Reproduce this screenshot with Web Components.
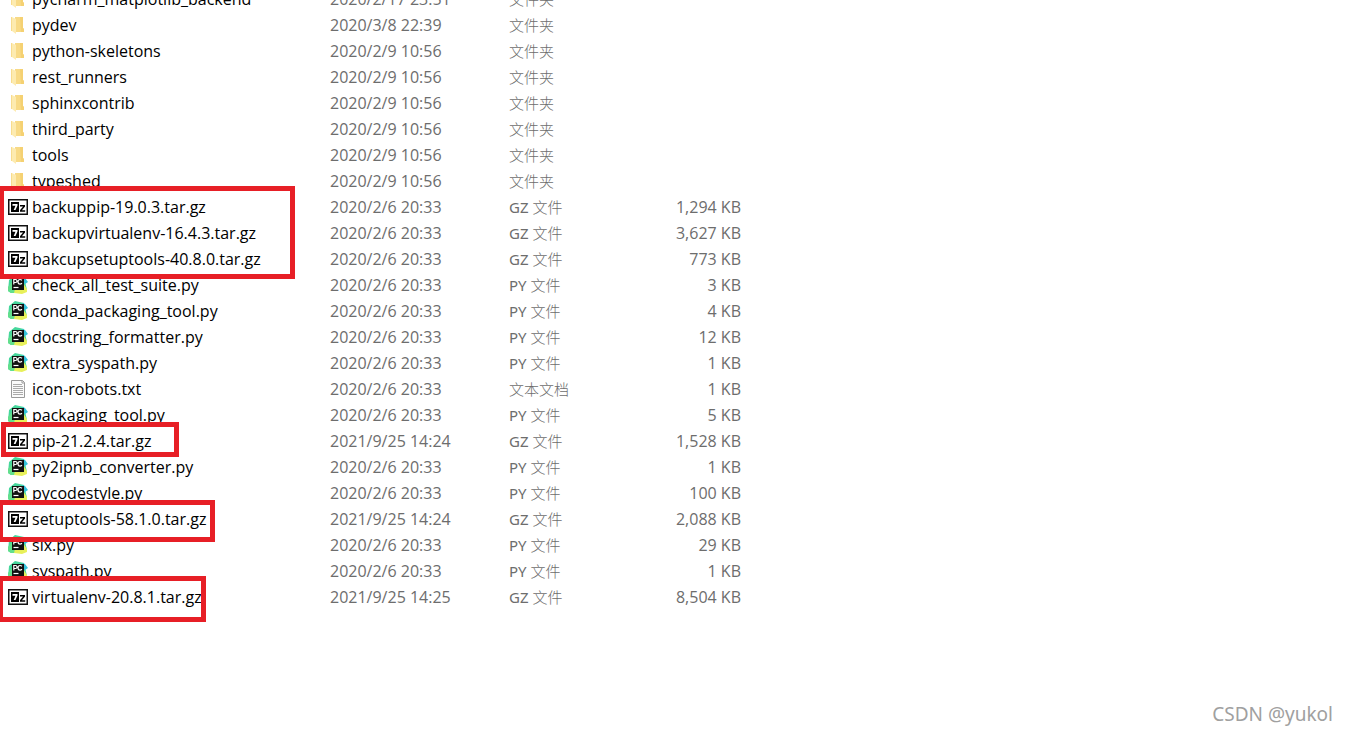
<!DOCTYPE html>
<html lang="zh-CN">
<head>
    <meta charset="UTF-8">
    <title>helpers</title>
    <style>
        body {
            margin: 0;
            background: #fff;
            overflow: hidden;
            font-family: "Open Sans", "Noto Sans CJK SC", sans-serif;
        }
    </style>
</head>

<body>

<file-explorer>
    <file-list></file-list>
    <mark-box slot="marks" style="--x: -1px; --y: 186px; --w: 296px; --h: 93px"></mark-box>
    <mark-box slot="marks" style="--x: 1px; --y: 422px; --w: 178px; --h: 35px"></mark-box>
    <mark-box slot="marks" style="--x: -2px; --y: 500px; --w: 217px; --h: 42px"></mark-box>
    <mark-box slot="marks" style="--x: -2px; --y: 576px; --w: 208px; --h: 46px"></mark-box>
    <water-mark slot="marks">CSDN @yukol</water-mark>
</file-explorer>

<script>
  const FOLDER = "文件夹";
  const files = [
    ["folder", "pycharm_matplotlib_backend", "2020/2/17 23:51", FOLDER, ""],
    ["folder", "pydev", "2020/3/8 22:39", FOLDER, ""],
    ["folder", "python-skeletons", "2020/2/9 10:56", FOLDER, ""],
    ["folder", "rest_runners", "2020/2/9 10:56", FOLDER, ""],
    ["folder", "sphinxcontrib", "2020/2/9 10:56", FOLDER, ""],
    ["folder", "third_party", "2020/2/9 10:56", FOLDER, ""],
    ["folder", "tools", "2020/2/9 10:56", FOLDER, ""],
    ["folder", "typeshed", "2020/2/9 10:56", FOLDER, ""],
    ["gz", "backuppip-19.0.3.tar.gz", "2020/2/6 20:33", "GZ 文件", "1,294 KB"],
    ["gz", "backupvirtualenv-16.4.3.tar.gz", "2020/2/6 20:33", "GZ 文件", "3,627 KB"],
    ["gz", "bakcupsetuptools-40.8.0.tar.gz", "2020/2/6 20:33", "GZ 文件", "773 KB"],
    ["py", "check_all_test_suite.py", "2020/2/6 20:33", "PY 文件", "3 KB"],
    ["py", "conda_packaging_tool.py", "2020/2/6 20:33", "PY 文件", "4 KB"],
    ["py", "docstring_formatter.py", "2020/2/6 20:33", "PY 文件", "12 KB"],
    ["py", "extra_syspath.py", "2020/2/6 20:33", "PY 文件", "1 KB"],
    ["txt", "icon-robots.txt", "2020/2/6 20:33", "文本文档", "1 KB"],
    ["py", "packaging_tool.py", "2020/2/6 20:33", "PY 文件", "5 KB"],
    ["gz", "pip-21.2.4.tar.gz", "2021/9/25 14:24", "GZ 文件", "1,528 KB"],
    ["py", "py2ipnb_converter.py", "2020/2/6 20:33", "PY 文件", "1 KB"],
    ["py", "pycodestyle.py", "2020/2/6 20:33", "PY 文件", "100 KB"],
    ["gz", "setuptools-58.1.0.tar.gz", "2021/9/25 14:24", "GZ 文件", "2,088 KB"],
    ["py", "six.py", "2020/2/6 20:33", "PY 文件", "29 KB"],
    ["py", "syspath.py", "2020/2/6 20:33", "PY 文件", "1 KB"],
    ["gz", "virtualenv-20.8.1.tar.gz", "2021/9/25 14:25", "GZ 文件", "8,504 KB"]
  ];

  const icons = {
    folder: `
      <path d="M7 2h8v11l1 1v3H7z" fill="#f8da86"/>
      <path d="M12 2h3v11l1 1v3h-3z" fill="#f5d172"/>
      <path d="M4 2l4 2v15l-4-3z" fill="#fdebb0"/>
      <path d="M3.500 2v14" stroke="#f8dc8e"/>`,
    gz: `
      <rect x="0.750" y="2.750" width="18.500" height="14.500" fill="#fff" stroke="#111" stroke-width="1.500"/>
      <path d="M3 5h8v10H3z" fill="#000"/>
      <path d="M4.500 7h5v1.500L7.500 13H5.700L7.500 8.800H4.500z" fill="#fff"/>
      <path d="M12 8.700h5M16.500 9L12.500 13.700M12 14h5.200" stroke="#000" stroke-width="1.500" fill="none"/>`,
    py: `
      <path d="M1 5L7 0l9 2 3 13-6 3H3L0 16z" fill="#46d79c"/>
      <path d="M0 12l5-6 5 12H3L0 16z" fill="#62df8c"/>
      <path d="M14 2l3 1 3 4-3 2-3-3z" fill="#35c3dc"/>
      <path d="M15 8l4 6v3l-5 2-8-1 1-4h8z" fill="#e8f05a"/>
      <path d="M4 3h12v12H4z" fill="#111"/>
      <path d="M5.800 9.500V4.500h1.700q1.500 0 1.500 1.500T7.500 7.500H6M14 5.300q-1-.8-2-.8-2 0-2 2.300t2 2.300q1 0 2-.8" fill="none" stroke="#fff" stroke-width="1.200"/>
      <path d="M5.500 12.500h5" stroke="#fff" stroke-width="1.200"/>`,
    txt: `
      <path d="M3.500 1.500h11l2 2v15h-13z" fill="#fafafa" stroke="#999"/>
      <path d="M14 1.500v2.500h2.500" fill="none" stroke="#999"/>
      <path d="M5 5.500h9M5 7.500h10M5 9.500h10M5 11.500h10M5 13.500h10M5 15.500h10" stroke="#aaa"/>`
  };

  class FileExplorer extends HTMLElement {
    constructor() {
      super();
      this.attachShadow({mode: "open"});
      this.shadowRoot.innerHTML = `
        <style>
          :host {
            display: block;
            position: relative;
            height: 100vh;
            overflow: hidden;
          }
        </style>
        <slot></slot>
        <slot name="marks"></slot>`;
    }
  }

  class FileIcon extends HTMLElement {
    constructor() {
      super();
      this.attachShadow({mode: "open"});
    }

    connectedCallback() {
      this.shadowRoot.innerHTML = `
        <style>
          :host {
            display: block;
            flex: none;
            width: 20px;
            height: 20px;
          }

          svg {
            display: block;
          }
        </style>
        <svg width="20" height="20" viewBox="0 0 20 20" aria-hidden="true">${icons[this.getAttribute("type")]}</svg>`;
    }
  }

  class FileList extends HTMLElement {
    constructor() {
      super();
      this.attachShadow({mode: "open"});
      // the list is scrolled by about half a row
      this.shadowRoot.innerHTML = `
        <style>
          :host {
            display: block;
            margin-top: -14px;
            font-size: 16px;
            line-height: 26px;
            color: #6d6d6d;
          }

          table {
            border-collapse: collapse;
            table-layout: fixed;
            width: 741px;
          }

          td {
            height: 26px;
            padding: 0;
            white-space: nowrap;
          }

          .name {
            width: 330px;
            color: #000;
          }

          .date {
            width: 179px;
          }

          .type {
            font-family: "Noto Sans", "Noto Sans CJK SC Light", "Noto Sans CJK SC", sans-serif;
            font-size: 15px;
          }

          .size {
            width: 112px;
            text-align: right;
          }

          .file {
            display: flex;
            align-items: center;
            gap: 4px;
            padding-left: 8px;
          }
        </style>
        <table>
          <tbody>
            ${files.map(([icon, name, date, type, size]) => `
            <tr>
              <td class="name"><div class="file"><file-icon type="${icon}"></file-icon><span>${name}</span></div></td>
              <td class="date">${date}</td>
              <td class="type">${type}</td>
              <td class="size">${size}</td>
            </tr>`).join("")}
          </tbody>
        </table>`;
    }
  }

  // red frame drawn over the list
  class MarkBox extends HTMLElement {
    constructor() {
      super();
      this.attachShadow({mode: "open"});
      this.shadowRoot.innerHTML = `
        <style>
          :host {
            display: block;
            position: absolute;
            box-sizing: border-box;
            left: var(--x);
            top: var(--y);
            width: var(--w);
            height: var(--h);
            border: 5px solid #e71f26;
            pointer-events: none;
          }
        </style>`;
    }
  }

  class WaterMark extends HTMLElement {
    constructor() {
      super();
      this.attachShadow({mode: "open"});
      this.shadowRoot.innerHTML = `
        <style>
          :host {
            display: block;
            position: absolute;
            right: 14px;
            bottom: 8px;
            font-family: "Noto Sans", sans-serif;
            font-size: 19px;
            line-height: 26px;
            color: #a0a0a0;
          }
        </style>
        <slot></slot>`;
    }
  }

  customElements.define("file-explorer", FileExplorer);
  customElements.define("file-icon", FileIcon);
  customElements.define("file-list", FileList);
  customElements.define("mark-box", MarkBox);
  customElements.define("water-mark", WaterMark);
</script>
</body>
</html>
